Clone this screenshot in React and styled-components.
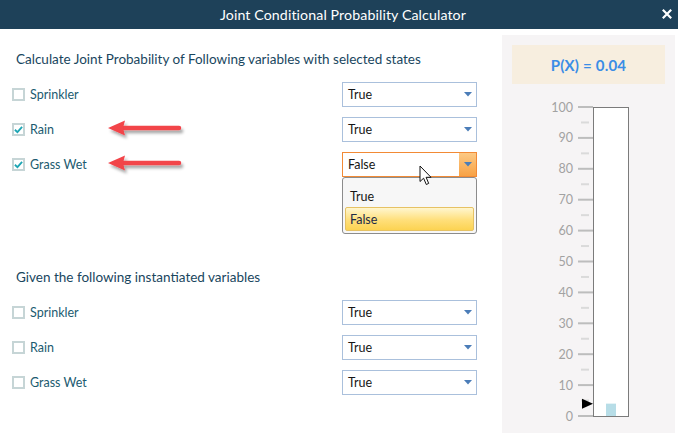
import React from 'react';
import styled, { createGlobalStyle, css } from 'styled-components';

const GlobalStyle = createGlobalStyle`
  html, body {
    margin: 0;
    padding: 0;
    background: #ffffff;
  }

  body {
    font-family: Lato, 'Open Sans', sans-serif;
  }
`;

const Window = styled.div`
  width: 678px;
  height: 434px;
  display: flex;
  flex-direction: column;
  overflow: hidden;
  background: #ffffff;
`;

const TitleBar = styled.div`
  height: 29px;
  flex-shrink: 0;
  display: flex;
  align-items: center;
  justify-content: center;
  padding-left: 8px;
  position: relative;
  background: #1e4159;
  color: #ffffff;
`;

const Title = styled.span`
  font-size: 14.2px;
  letter-spacing: 0.1px;
`;

const CloseButton = styled.div`
  position: absolute;
  right: 6px;
  top: 9px;
  width: 10px;
  height: 10px;
  display: flex;
`;

const Body = styled.div`
  flex: 1;
  display: flex;
  min-height: 0;
`;

const Main = styled.div`
  flex: 1;
  padding: 21px 0 0 12px;
  display: flex;
  flex-direction: column;
`;

const Section = styled.section`
  display: flex;
  flex-direction: column;
  margin-top: ${(props) => props.$gap || 0}px;
`;

const Heading = styled.h3`
  margin: 0 0 14px 4px;
  font-size: 13.5px;
  line-height: 18px;
  font-weight: normal;
  color: #19465e;
`;

const Rows = styled.div`
  display: flex;
  flex-direction: column;
  gap: 10px;
`;

const Row = styled.div`
  height: 25px;
  display: grid;
  grid-template-columns: 96px 234px 135px;
  align-items: center;
`;

const LabelWrap = styled.label`
  display: flex;
  align-items: center;
  gap: 5px;
`;

const Box = styled.span`
  width: 13px;
  height: 13px;
  box-sizing: border-box;
  border: 2px solid #c6d5d6;
  background: #ffffff;
  display: flex;
  align-items: center;
  justify-content: center;
`;

const LabelText = styled.span`
  font-size: 12.5px;
  color: #1b5b70;
`;

const Annotation = styled.div`
  display: flex;
  align-items: center;
`;

const Select = styled.div`
  position: relative;
  height: 25px;
  box-sizing: border-box;
  border: 1px solid #aac0dc;
  background: #ffffff;
  display: flex;
  align-items: center;

  ${(props) =>
    props.$open &&
    css`
      border-color: #f28a35;
    `}
`;

const SelectValue = styled.span`
  flex: 1;
  padding-left: 5px;
  font-size: 12.5px;
  color: #161616;
`;

const SelectButton = styled.span`
  width: 17px;
  align-self: stretch;
  display: flex;
  align-items: center;
  justify-content: center;

  ${(props) =>
    props.$open &&
    css`
      background: linear-gradient(#fcc985, #f8a245);
    `}
`;

const Popup = styled.div`
  position: absolute;
  top: 24px;
  left: -1px;
  width: 135px;
  height: 57px;
  box-sizing: border-box;
  border: 1px solid #8c8c8c;
  border-radius: 3px;
  background: #f7f7f7;
  padding: 7px 2px 0;
  display: flex;
  flex-direction: column;
  z-index: 2;
`;

const Option = styled.div`
  height: 22px;
  display: flex;
  align-items: center;
  padding-left: 4px;
  font-size: 12.5px;
  color: #161616;
  box-sizing: border-box;
  border: 1px solid transparent;
  border-radius: 2px;

  ${(props) =>
    props.$active &&
    css`
      height: 24px;
      border-color: #e6c264;
      background: linear-gradient(#fff6cf, #ffdf7a 55%, #fcd352);
      color: #1d2a48;
    `}
`;

const Pointer = styled.svg`
  position: absolute;
  left: 76px;
  top: 12px;
  z-index: 3;
`;

const Side = styled.aside`
  width: 173px;
  margin: 6px 3px 1px 0;
  background: #f6f4f5;
  display: flex;
  flex-direction: column;
`;

const Result = styled.div`
  margin: 10px 10px 0;
  height: 39px;
  display: flex;
  align-items: center;
  justify-content: center;
  background: #f7eedf;
  color: #3a8de6;
  font-size: 15px;
  font-weight: bold;
  letter-spacing: 0.2px;
`;

const GaugeSvg = styled.svg`
  display: block;
  margin-top: 6px;
`;

const Check = () => (
  <svg width="10" height="9" viewBox="0 0 10 9">
    <path d="M1 4.8 L3.8 7.5 L9 1.5" fill="none" stroke="#1ea6b4" strokeWidth="2" />
  </svg>
);

const Caret = () => (
  <svg width="8" height="5" viewBox="0 0 8 5">
    <path d="M0 0 H8 L4 4.5 Z" fill="#4b7db8" />
  </svg>
);

const RedArrow = () => (
  <svg width="80" height="24" viewBox="0 0 80 24">
    <defs>
      <filter id="arrowShadow" x="-20%" y="-50%" width="140%" height="200%">
        <feDropShadow dx="2" dy="3" stdDeviation="1.6" floodColor="#000" floodOpacity="0.35" />
      </filter>
    </defs>
    <g filter="url(#arrowShadow)">
      <line x1="15" y1="10" x2="71" y2="10" stroke="#f2444a" strokeWidth="4.5" strokeLinecap="round" />
      <path d="M0 10 L17 2.5 L15 10 L17 17.5 Z" fill="#f2444a" />
    </g>
  </svg>
);

function Dropdown({ value, open, options }) {
  return (
    <Select $open={open}>
      <SelectValue>{value}</SelectValue>
      <SelectButton $open={open}>
        <Caret />
      </SelectButton>
      {open && (
        <>
          <Popup>
            {options.map((opt) => (
              <Option key={opt} $active={opt === value}>
                {opt}
              </Option>
            ))}
          </Popup>
          <Pointer width="14" height="22" viewBox="0 0 14 22">
            <path
              d="M1 1 L1 16.5 L4.6 13.2 L7.3 19.5 L9.7 18.4 L7.1 12.3 L12 12.3 Z"
              fill="#ffffff"
              stroke="#111"
              strokeWidth="1"
              strokeLinejoin="round"
            />
          </Pointer>
        </>
      )}
    </Select>
  );
}

function VariableRow({ name, checked, value, open, marked }) {
  return (
    <Row>
      <LabelWrap>
        <Box>{checked && <Check />}</Box>
        <LabelText>{name}</LabelText>
      </LabelWrap>
      <Annotation>{marked && <RedArrow />}</Annotation>
      <Dropdown value={value} open={open} options={['True', 'False']} />
    </Row>
  );
}

// vertical scale 0..100 with the current value marked
function Gauge({ value }) {
  const top = 17;
  const bottom = 326;
  const y = (v) => bottom - ((bottom - top) * v) / 100;
  const majors = [0, 10, 20, 30, 40, 50, 60, 70, 80, 90, 100];
  const fillTop = y(value);

  return (
    <GaugeSvg width="173" height="343" viewBox="0 0 173 343">
      {majors.map((v) => (
        <g key={v}>
          <text
            x="71"
            y={y(v)}
            textAnchor="end"
            dominantBaseline="central"
            fontSize="12.5"
            fontFamily="Lato, 'Open Sans', sans-serif"
            fill="#a2a2a2"
          >
            {v}
          </text>
          <line x1="76" x2="91" y1={y(v)} y2={y(v)} stroke="#bdbdbd" strokeWidth="2" />
          {v < 100 && (
            <line x1="79" x2="87" y1={y(v + 5)} y2={y(v + 5)} stroke="#dadada" strokeWidth="2" />
          )}
        </g>
      ))}
      <rect x="91.5" y={top + 0.5} width="35" height={bottom - top} fill="#ffffff" stroke="#7b7b7b" />
      <rect x="104" y={fillTop} width="10" height={bottom - fillTop} fill="#b7dde7" />
      <path d={`M80 ${fillTop - 5} L91 ${fillTop} L80 ${fillTop + 5} Z`} fill="#000000" />
    </GaugeSvg>
  );
}

const selected = [
  { name: 'Sprinkler', checked: false, value: 'True' },
  { name: 'Rain', checked: true, value: 'True', marked: true },
  { name: 'Grass Wet', checked: true, value: 'False', marked: true, open: true },
];

const given = [
  { name: 'Sprinkler', checked: false, value: 'True' },
  { name: 'Rain', checked: false, value: 'True' },
  { name: 'Grass Wet', checked: false, value: 'True' },
];

export default function App() {
  return (
    <>
      <GlobalStyle />
      <Window>
        <TitleBar>
          <Title>Joint Conditional Probability Calculator</Title>
          <CloseButton>
            <svg width="10" height="10" viewBox="0 0 10 10">
              <path d="M0.8 0.8 L9.2 9.2 M9.2 0.8 L0.8 9.2" stroke="#ffffff" strokeWidth="2.2" />
            </svg>
          </CloseButton>
        </TitleBar>
        <Body>
          <Main>
            <Section>
              <Heading>Calculate Joint Probability of Following variables with selected states</Heading>
              <Rows>
                {selected.map((row) => (
                  <VariableRow key={row.name} {...row} />
                ))}
              </Rows>
            </Section>
            <Section $gap={91}>
              <Heading>Given the following instantiated variables</Heading>
              <Rows>
                {given.map((row) => (
                  <VariableRow key={row.name} {...row} />
                ))}
              </Rows>
            </Section>
          </Main>
          <Side>
            <Result>P(X) = 0.04</Result>
            <Gauge value={4} />
          </Side>
        </Body>
      </Window>
    </>
  );
}
